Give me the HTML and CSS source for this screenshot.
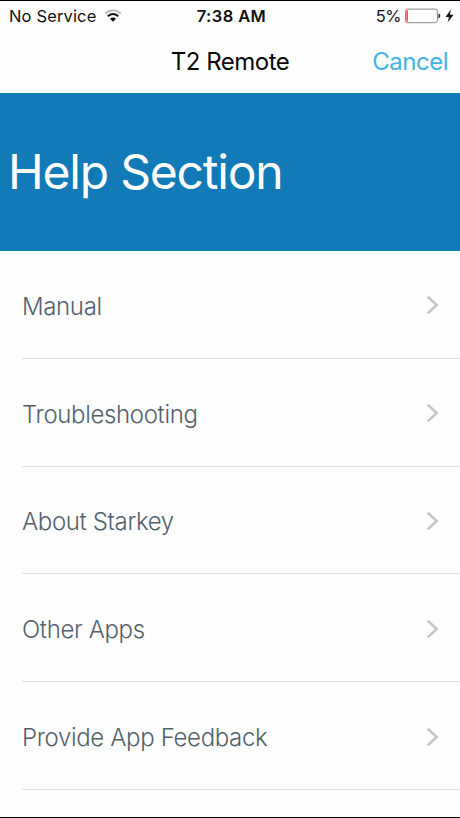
FILE: index.html
```
<!DOCTYPE html>
<html lang="en">
<head>
    <meta charset="UTF-8">
    <meta name="viewport" content="width=device-width, initial-scale=1.0">
    <title>T2 Remote - Help</title>
    <link rel="stylesheet" href="styles.css">
</head>
<body>
    <div class="screen">
        <div class="status-bar">
            <div class="status-left">
                <span class="carrier">No Service</span>
                <svg class="wifi" width="18" height="14" viewBox="0 0 18 14" fill="none">
                    <path d="M1.2 4.5Q9 -2.1 16.8 4.5" stroke="#b9b9b9" stroke-width="2"/>
                    <path d="M3.8 7.2Q9 2.9 14.2 7.2" stroke="#111" stroke-width="2"/>
                    <path d="M6 9.8Q9 7.2 12 9.8L9 12.8Z" fill="#111"/>
                </svg>
            </div>
            <span class="time">7:38 AM</span>
            <div class="status-right">
                <span class="percent">5%</span>
                <svg class="battery" width="36" height="16" viewBox="0 0 36 16">
                    <rect x="0.6" y="1.1" width="31.8" height="13.6" rx="2.2" fill="#fff" stroke="#858585"/>
                    <path d="M1.2 2.5H3V13.5H1.2Z" fill="#fa5a50"/>
                    <path d="M33.4 5.6Q35.4 6 35.4 8T33.4 10.4Z" fill="#333"/>
                </svg>
                <svg class="bolt" width="9" height="14" viewBox="0 0 9 14">
                    <path d="M6 0.5L0.5 8H4L2.6 13.5L8.5 5.7H4.9Z" fill="#111"/>
                </svg>
            </div>
        </div>

        <div class="nav-bar">
            <span class="nav-title">T2 Remote</span>
            <a class="cancel">Cancel</a>
        </div>

        <div class="banner">
            <h1>Help Section</h1>
        </div>

        <ul class="menu">
            <li>
                <span class="label">Manual</span>
                <svg class="chevron" width="14" height="20" viewBox="0 0 14 20"><path d="M1.7 1.6L10.7 10L1.7 18.4"/></svg>
            </li>
            <li>
                <span class="label">Troubleshooting</span>
                <svg class="chevron" width="14" height="20" viewBox="0 0 14 20"><path d="M1.7 1.6L10.7 10L1.7 18.4"/></svg>
            </li>
            <li>
                <span class="label">About Starkey</span>
                <svg class="chevron" width="14" height="20" viewBox="0 0 14 20"><path d="M1.7 1.6L10.7 10L1.7 18.4"/></svg>
            </li>
            <li>
                <span class="label">Other Apps</span>
                <svg class="chevron" width="14" height="20" viewBox="0 0 14 20"><path d="M1.7 1.6L10.7 10L1.7 18.4"/></svg>
            </li>
            <li>
                <span class="label">Provide App Feedback</span>
                <svg class="chevron" width="14" height="20" viewBox="0 0 14 20"><path d="M1.7 1.6L10.7 10L1.7 18.4"/></svg>
            </li>
        </ul>
    </div>
</body>
</html>
```
FILE: styles.css
```
* {
    box-sizing: border-box;
}
body {
    margin: 0;
    font-family: Inter, 'Liberation Sans', sans-serif;
    background: #fefefe;
}
.screen {
    height: 818px;
    border-top: 1px solid #000;
    border-bottom: 1px solid #000;
    overflow: hidden;
}
.status-bar {
    display: grid;
    grid-template-columns: 1fr auto 1fr;
    align-items: center;
    height: 30px;
    padding: 0 6px 0 9px;
    font-size: 16.5px;
    line-height: 20px;
    color: #111;
}
.status-left,
.status-right {
    display: flex;
    align-items: center;
}
.status-left {
    gap: 8px;
}
.carrier {
    letter-spacing: 0.15px;
}
.status-right {
    justify-content: flex-end;
}
.percent {
    margin-right: 4px;
    letter-spacing: -0.5px;
}
.bolt {
    margin-left: 4px;
}
.time {
    font-weight: 600;
    letter-spacing: 0.4px;
}
.nav-bar {
    display: grid;
    grid-template-columns: 1fr auto 1fr;
    align-items: center;
    height: 62px;
    padding: 0 12px;
    font-size: 24px;
    line-height: 30px;
    letter-spacing: -0.5px;
}
.nav-title {
    grid-column: 2;
    color: #080808;
}
.cancel {
    justify-self: end;
    color: #43b3e8;
}
.banner {
    display: flex;
    align-items: center;
    height: 158px;
    padding-left: 8px;
    background: #117ab7;
}
h1 {
    margin: 0;
    font-size: 48px;
    font-weight: 400;
    line-height: 58px;
    letter-spacing: -1.2px;
    color: #fff;
}
.menu {
    margin: 0;
    padding: 0 0 0 22px;
    list-style: none;
}
.menu li {
    display: flex;
    justify-content: space-between;
    align-items: center;
    height: 107.8px;
    padding: 2px 20px 0 0;
    border-bottom: 1px solid #dedfe0;
    font-size: 24px;
    font-weight: 300;
    line-height: 30px;
    letter-spacing: -0.35px;
    color: #53616a;
}
.label {
    padding-top: 3px;
}
.chevron {
    fill: none;
    stroke: #c4c4c6;
    stroke-width: 2.5;
}
```
